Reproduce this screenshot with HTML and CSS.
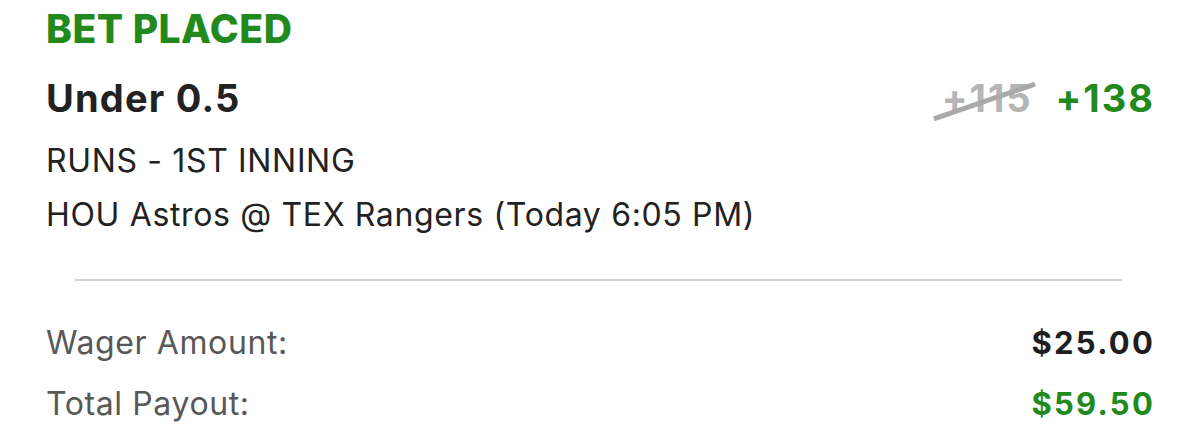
FILE: index.html
```html
<!DOCTYPE html>
<html>
<head>
	<title>Bet Placed</title>
	<link rel="stylesheet" href="styles.css">
</head>
<body>
	<div class="slip">
		<h1 class="status">BET PLACED</h1>
		<div class="pick">
			<span class="pick-name">Under 0.5</span>
			<span class="odds">
				<span class="old-odds">+115</span>
				<span class="new-odds">+138</span>
			</span>
		</div>
		<p class="market">RUNS - 1ST INNING</p>
		<p class="event">HOU Astros @ TEX Rangers (Today 6:05 PM)</p>
		<hr class="divider">
		<div class="totals">
			<div class="row">
				<span class="label">Wager Amount:</span>
				<span class="amount">$25.00</span>
			</div>
			<div class="row">
				<span class="label">Total Payout:</span>
				<span class="amount payout">$59.50</span>
			</div>
		</div>
	</div>
</body>
</html>
```
FILE: styles.css
```css
body{
	margin: 0;
	background: #fff;
	font-family: Inter, "Noto Sans", sans-serif;
	color: #222;
}
.slip{
	padding: 6px 45px 0 46px;
}
.status{
	margin: 0;
	font-size: 39px;
	line-height: 46px;
	font-weight: 800;
	letter-spacing: 0.5px;
	color: #22891c;
}
.pick{
	display: flex;
	justify-content: space-between;
	align-items: baseline;
	margin-top: 24px;
}
.pick-name{
	font-size: 38px;
	line-height: 44px;
	font-weight: 700;
	letter-spacing: 1.2px;
}
.odds{
	display: flex;
	gap: 23px;
	font-size: 38px;
	line-height: 44px;
	font-weight: 700;
	letter-spacing: 2px;
}
.old-odds{
	position: relative;
	color: #b5b5b5;
}
.old-odds::after{
	content: "";
	position: absolute;
	left: -11px;
	right: -5px;
	top: 53%;
	height: 5px;
	background: #a9a9a9;
	transform: rotate(-19deg);
}
.new-odds{
	color: #22891c;
}
.market, .event{
	margin: 0;
	font-size: 32px;
	line-height: 40px;
	font-weight: 400;
	letter-spacing: 0.65px;
}
.market{
	margin-top: 21px;
}
.event{
	margin-top: 14px;
}
.divider{
	border: none;
	height: 2px;
	background: #d2d2d2;
	margin: 44px 33px 0 29px;
}
.totals{
	margin-top: 42px;
}
.row{
	display: flex;
	justify-content: space-between;
	align-items: baseline;
	height: 61px;
}
.label{
	font-size: 32px;
	letter-spacing: 0.6px;
	color: #585858;
}
.amount{
	font-size: 31px;
	font-weight: 700;
	letter-spacing: 2.2px;
	color: #1e1e1e;
}
.payout{
	color: #22891c;
}
```
